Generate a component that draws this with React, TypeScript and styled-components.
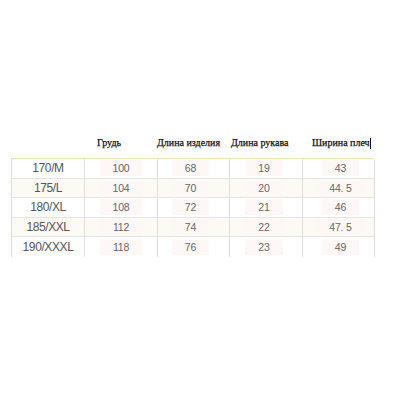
import React from "react";
import styled, { createGlobalStyle } from "styled-components";

const Global = createGlobalStyle`
  html, body { margin: 0; padding: 0; background: #ffffff; }
  body { width: 400px; height: 400px; overflow: hidden; }
`;

const Page = styled.div`
  padding: 136px 0 0 11px;
`;

const HeaderRow = styled.div`
  display: grid;
  grid-template-columns: 73px 73px 72px 73px 72px;
  height: 22px;
  font-family: "Liberation Serif", "DejaVu Serif", serif;
  font-weight: normal;
  font-size: 10px;
  color: #111;
  -webkit-text-stroke: 0.25px #111;
  align-items: start;
`;

const HeaderCell = styled.div<{ $shift: number }>`
  padding-left: ${(p) => p.$shift}px;
  white-space: nowrap;
  line-height: 14px;
  display: flex;
  align-items: center;
`;

const Caret = styled.span`
  display: inline-block;
  width: 1.5px;
  height: 11px;
  background: #111;
`;

const Grid = styled.div`
  display: grid;
  grid-template-columns: 73px 73px 72px 73px 72px;
  grid-auto-rows: 19.6px;
  width: 363px;
  border-top: 1.5px solid #ece3b8;
  border-left: 1px solid #dcdcdc;
  box-sizing: border-box;
`;

const Cell = styled.div<{ $alt: boolean; $last: boolean }>`
  box-sizing: border-box;
  border-right: 1px solid #dedede;
  border-bottom: ${(p) => (p.$last ? "none" : "1px solid #e4e4e4")};
  background: ${(p) => (p.$alt ? "#fcfaf3" : "#ffffff")};
  display: flex;
  align-items: center;
  justify-content: center;
`;

const SizeText = styled.span`
  font-family: "Liberation Sans", Arial, sans-serif;
  font-size: 12px;
  color: #555;
  letter-spacing: -0.4px;
`;

const Value = styled.span<{ $dx: number }>`
  font-family: "Liberation Sans", Arial, sans-serif;
  font-size: 10.5px;
  color: #666;
  letter-spacing: -0.2px;
  background: #fdf8f6;
  padding: 2px 13px;
  transform: translateX(${(p) => p.$dx}px);
`;

const headers: { text: string; shift: number; caret?: boolean }[] = [
  { text: "", shift: 0 },
  { text: "Грудь", shift: 13 },
  { text: "Длина изделия", shift: -1 },
  { text: "Длина рукава", shift: 2 },
  { text: "Ширина плеч", shift: 10, caret: true },
];

const rows: string[][] = [
  ["170/M", "100", "68", "19", "43"],
  ["175/L", "104", "70", "20", "44. 5"],
  ["180/XL", "108", "72", "21", "46"],
  ["185/XXL", "112", "74", "22", "47. 5"],
  ["190/XXXL", "118", "76", "23", "49"],
];

const offsets = [0, 0, -3, -2, 2];

export default function App() {
  return (
    <>
      <Global />
      <Page>
        <HeaderRow>
          {headers.map((h, i) => (
            <HeaderCell key={i} $shift={h.shift}>
              {h.text}
              {h.caret && <Caret />}
            </HeaderCell>
          ))}
        </HeaderRow>
        <Grid>
          {rows.map((r, ri) =>
            r.map((v, ci) => (
              <Cell key={`${ri}-${ci}`} $alt={ri % 2 === 1} $last={ri === rows.length - 1}>
                {ci === 0 ? <SizeText>{v}</SizeText> : <Value $dx={offsets[ci]}>{v}</Value>}
              </Cell>
            ))
          )}
        </Grid>
      </Page>
    </>
  );
}
